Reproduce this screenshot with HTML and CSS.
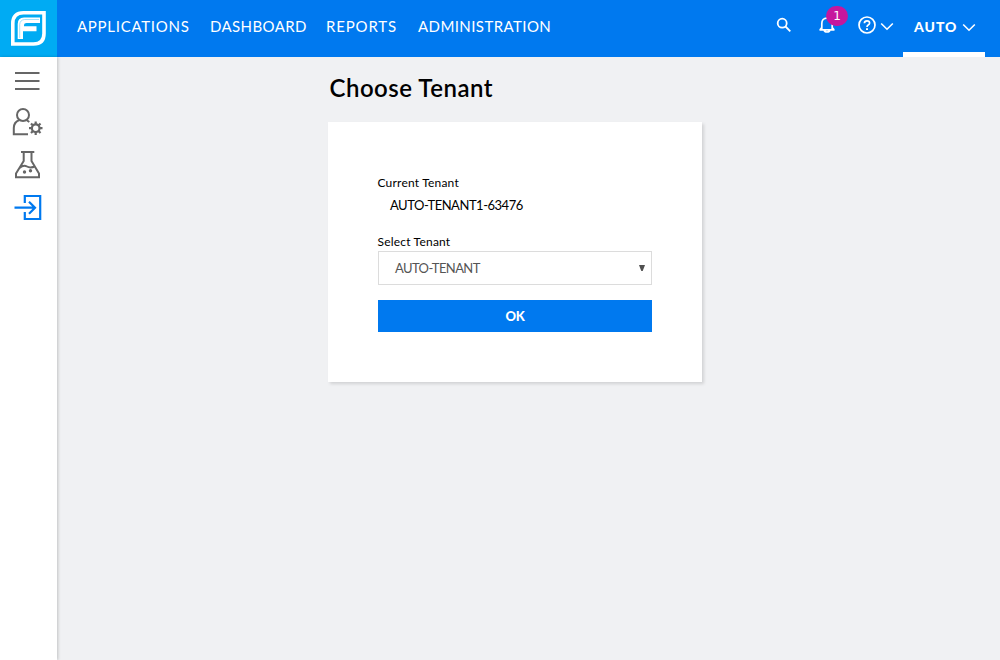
FILE: index.html
```html
<!DOCTYPE html>
<html lang="en">
<head>
<meta charset="utf-8">
<title>Choose Tenant</title>
<link rel="stylesheet" href="styles.css">
</head>
<body>
<header class="topbar">
  <a class="logo" aria-label="Home">
    <svg width="57" height="57" viewBox="0 0 57 57" fill="none">
      <path d="M12.800 44V23.500Q12.800 12.800 23.500 12.800H44V33.500Q44 44 33.500 44Z" stroke="#fff" stroke-width="3.600"/>
      <path d="M17.700 39V24Q17.700 17.500 24 17.500H40V23H26.500Q24 23 24 25V26.200H36.500V31.300H23V39Z" fill="#fff"/>
      <path d="M19.700 38V24.500Q20 20 24.500 19.500H39" stroke="#7ad4f9" stroke-width=".7"/>
    </svg>
  </a>
  <nav class="nav">
    <a class="nav-item applications">APPLICATIONS</a>
    <a class="nav-item dashboard">DASHBOARD</a>
    <a class="nav-item reports">REPORTS</a>
    <a class="nav-item administration">ADMINISTRATION</a>
  </nav>
  <div class="tools">
    <svg class="search" width="18" height="18" viewBox="0 0 18 18" fill="none" stroke="#fff" stroke-width="1.8"><circle cx="7.2" cy="7.2" r="4.5"/><path d="M10.5 10.5L15.3 15.3"/></svg>
    <span class="bell">
      <svg width="18" height="20" viewBox="0 0 18 20" fill="none" stroke="#fff" stroke-width="1.7"><path d="M1.500 14.900H16.500M3.800 15V8.500Q3.800 3.200 9 3.200T14.200 8.500V15M6.200 15Q6.500 17 9 17T11.800 15M3.800 12.500L1.800 15M14.200 12.500L16.200 15"/></svg>
      <span class="badge">1</span>
    </span>
    <span class="help">
      <svg width="18" height="18" viewBox="0 0 18 18" fill="none" stroke="#fff"><circle cx="9" cy="9" r="8" stroke-width="1.7"/><path d="M6.400 7.300Q6.400 4.800 9 4.800T11.600 7Q11.600 8.200 10.200 9Q9 9.800 9 11" stroke-width="1.7"/><path d="M9 12.200V14" stroke-width="2"/></svg>
      <svg class="chevron" width="14" height="9" viewBox="0 0 14 9" fill="none" stroke="#fff" stroke-width="1.6"><path d="M1.200 1.500L7 7.200L12.800 1.500"/></svg>
    </span>
    <a class="account">
      <span class="account-name">AUTO</span>
      <svg width="14" height="9" viewBox="0 0 14 9" fill="none" stroke="#fff" stroke-width="1.6"><path d="M1.200 1.500L7 7.200L12.800 1.500"/></svg>
    </a>
  </div>
</header>
<div class="body">
  <aside class="sidebar">
    <svg width="57" height="48" viewBox="0 57 57 48" stroke="#666" stroke-width="2"><path d="M15 73H39.500M15 81H39.500M15 89H39.500"/></svg>
    <svg width="57" height="38" viewBox="0 105 57 38" fill="none" stroke="#666" stroke-width="2">
      <circle cx="23" cy="115" r="6"/>
      <path d="M19.500 120Q13.800 122 13.800 128V134.200H28M26.500 120L29.300 122"/>
      <circle cx="35.700" cy="128.200" r="3.800" stroke-width="2.200"/>
      <path d="M35.700 121.500V124.500M35.700 132V135M29 128.200H32M39.500 128.200H42.500M31 123.500L33 125.500M38.500 131L40.500 133M40.500 123.500L38.500 125.500M33 131L31 133" stroke-width="2.200"/>
    </svg>
    <svg width="57" height="43" viewBox="0 143 57 43" fill="none" stroke="#666" stroke-width="2">
      <path d="M21 152H34.300M23.700 152V161L16 173.500V177.200H39V173.500L31.500 161V152M19.500 168Q23.500 164.500 27 166.500T35.500 166"/>
      <g fill="#666" stroke="none"><circle cx="24.500" cy="172" r="1.700"/><circle cx="30.500" cy="170.700" r="1.700"/></g>
    </svg>
    <svg width="57" height="43" viewBox="0 186 57 43" fill="none" stroke="#0079ef" stroke-width="2.200"><path d="M24.800 203V196H40.200V219H24.800V212M14.500 207.700H35M29 201.700L35 207.700L29 213.700"/></svg>
  </aside>
  <main class="content">
    <h1 class="title"><span>Choose Tenant</span></h1>
    <section class="card">
      <div class="label current-label">Current Tenant</div>
      <div class="current">AUTO-TENANT1-63476</div>
      <div class="label select-label">Select Tenant</div>
      <div class="select"><span class="option">AUTO-TENANT</span><svg width="6" height="7" viewBox="0 0 6 7"><path d="M0 0H6L3.700 6H2.300Z" fill="#505050"/></svg></div>
      <button class="ok">OK</button>
    </section>
  </main>
</div>
</body>
</html>
```
FILE: styles.css
```css
* { box-sizing: border-box; }
body {
  margin: 0;
  height: 660px;
  display: flex;
  flex-direction: column;
  background: #f0f1f3;
  font-family: Lato, "Open Sans", sans-serif;
  color: #000;
  overflow: hidden;
}
svg { display: block; flex: none; }
.topbar { display: flex; height: 57px; flex: none; background: #0079ef; color: #fff; }
.logo { width: 57px; background: #00abf3; }
.nav { display: flex; padding: 16px 0 0 20px; gap: 20px; }
.nav-item { font-size: 15px; line-height: 20px; letter-spacing: .72px; white-space: nowrap; }
.applications { width: 113px; }
.dashboard { width: 96px; letter-spacing: .4px; }
.reports { width: 72px; letter-spacing: .85px; }
.administration { letter-spacing: .42px; }
.tools { display: flex; margin-left: auto; padding-right: 15px; }
.search { margin: 15.500px 25px 0 0; }
.bell { position: relative; margin: 15px 22px 0 0; }
.badge {
  position: absolute;
  left: 8px;
  top: -9px;
  width: 22px;
  height: 20px;
  border-radius: 10px;
  background: #c6179d;
  font: 12px/20px "DejaVu Sans", sans-serif;
  text-align: center;
}
.help { display: flex; margin: 16px 9px 0 0; }
.help .chevron { margin: 6px 0 0 4px; }
.account { display: flex; width: 82px; padding: 17px 9px 0 11px; border-bottom: 5px solid #fff; }
.account svg { margin: 6px 0 0 auto; }
.account-name { font-size: 14px; font-weight: 900; line-height: 20px; letter-spacing: .95px; }
.body { display: flex; flex: 1; }
.sidebar { width: 57px; background: #fff; box-shadow: 1px 0 3px rgba(0, 0, 0, .2); }
.content { padding: 14px 0 0 271px; }
.title { margin: 0 0 17px 1.500px; font-size: 24px; line-height: 34px; font-weight: 600; letter-spacing: .5px; white-space: nowrap; }
.card { width: 374px; height: 260px; padding: 52px 50px 0; background: #fff; box-shadow: 2px 2px 3px rgba(0, 0, 0, .13); }
.label { margin-left: -.5px; font-size: 12px; line-height: 18px; letter-spacing: .2px; }
.current { margin: 4px 0 0 12px; font-size: 13px; line-height: 18px; letter-spacing: -.48px; }
.select-label { margin-top: 19px; }
.select {
  display: flex;
  align-items: center;
  justify-content: space-between;
  height: 34px;
  padding: 0 6px 0 16px;
  border: 1px solid #dcdcdc;
  font-size: 13px;
  letter-spacing: -.6px;
  color: #555;
}
.ok {
  display: block;
  width: 274px;
  height: 32px;
  margin-top: 15px;
  padding: 0;
  border: 0;
  background: #0079ef;
  color: #fff;
  font: 900 13px/33px Lato, sans-serif;
  letter-spacing: -.4px;
}
```
